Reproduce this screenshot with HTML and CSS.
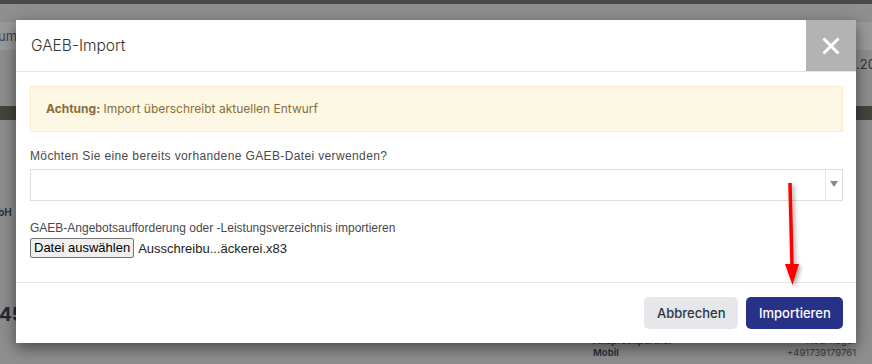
FILE: index.html
```html
<!DOCTYPE html>
<html lang="de">
<head>
<meta charset="utf-8">
<title>GAEB-Import</title>
<link rel="stylesheet" href="styles.css">
</head>
<body>
<div class="page">
  <div class="topbar"></div>
  <div class="tabs">
    <span class="tab tab-left">um</span>
    <span class="tab tab-right">N</span>
  </div>
  <div class="date">.20</div>
  <div class="band"></div>
  <div class="company">bH</div>
  <div class="number">45</div>
  <div class="contact">
    <div class="contact-row"><b>Ansprechpartner</b><span>Noel Reger</span></div>
    <div class="contact-row"><b>Mobil</b><span>+491739179761</span></div>
  </div>
</div>

<div class="modal">
  <div class="modal-header">
    <h4 class="modal-title">GAEB-Import</h4>
    <button class="close" type="button" aria-label="Schließen">
      <svg width="18" height="18" viewBox="0 0 18 18"><path d="M2.5 2.5 L15.5 15.5 M15.5 2.5 L2.5 15.5" stroke="#fff" stroke-width="3" stroke-linecap="square"/></svg>
    </button>
  </div>
  <div class="modal-body">
    <div class="alert"><b>Achtung:</b> Import überschreibt aktuellen Entwurf</div>
    <div class="group">
      <label class="label label-wide">Möchten Sie eine bereits vorhandene GAEB-Datei verwenden?</label>
      <div class="select">
        <span class="select-value"></span>
        <span class="select-arrow"><svg width="8" height="6" viewBox="0 0 8 6"><path d="M0 0 H8 L4 6 Z" fill="#888"/></svg></span>
      </div>
    </div>
    <div class="group group-file">
      <label class="label">GAEB-Angebotsaufforderung oder -Leistungsverzeichnis importieren</label>
      <div class="file">
        <span class="file-btn">Datei auswählen</span>
        <span class="file-name">Ausschreibu...äckerei.x83</span>
      </div>
    </div>
  </div>
  <div class="modal-footer">
    <button class="btn btn-cancel" type="button">Abbrechen</button>
    <button class="btn btn-primary" type="button">Importieren</button>
  </div>
</div>

<svg class="arrow" width="30" height="110" viewBox="0 0 30 110">
  <defs>
    <filter id="sh" x="-50%" y="-20%" width="200%" height="140%">
      <feDropShadow dx="2" dy="2" stdDeviation="2" flood-color="#000" flood-opacity="0.35"/>
    </filter>
  </defs>
  <g filter="url(#sh)">
    <path d="M12 2 L14 84" stroke="#ff0000" stroke-width="3.5" fill="none"/>
    <path d="M7 83 L21 83 L14.5 104 Z" fill="#ff0000"/>
  </g>
</svg>
</body>
</html>
```
FILE: styles.css
```css
* { box-sizing: border-box; }
html, body { margin: 0; padding: 0; }
body {
  width: 872px;
  height: 364px;
  overflow: hidden;
  background: #8f8f8f;
  font-family: Inter, "Liberation Sans", sans-serif;
  position: relative;
}
.page { width: 872px; height: 364px; position: relative; }
.topbar { height: 4px; background: #4b4a47; }
.tabs {
  display: flex;
  justify-content: space-between;
  margin-top: 18px;
  height: 28px;
}
.tab {
  background: #9b9b9b;
  color: #3e4250;
  font-size: 13px;
  line-height: 28px;
}
.tab-left { width: 40px; text-indent: -2px; }
.tab-right { width: 36px; padding-left: 10px; border-radius: 6px 0 0 6px; }
.date {
  text-align: right;
  font-size: 13px;
  color: #333;
  margin-top: 6px;
  margin-right: -4px;
  height: 20px;
}
.band { height: 14px; background: #45443f; margin-top: 30px; }
.company {
  margin-top: 86px;
  font-size: 10px;
  font-weight: 700;
  color: #2b3342;
  margin-left: -2px;
}
.number {
  margin-top: 85px;
  font-size: 19px;
  font-weight: 700;
  color: #232a36;
  margin-left: -1px;
}
.contact {
  position: absolute;
  left: 593px;
  top: 335px;
  width: 263px;
  font-size: 9.5px;
  color: #333;
}
.contact-row { display: flex; justify-content: space-between; line-height: 12px; }
.contact-row b { color: #2f3441; }
.contact-row span { color: #3a3a3a; }

.modal {
  position: absolute;
  left: 16px;
  top: 20px;
  width: 840px;
  height: 323px;
  background: #fff;
  box-shadow: 0 5px 15px rgba(0,0,0,0.5);
  display: flex;
  flex-direction: column;
}
.modal-header {
  height: 52px;
  border-bottom: 1px solid #e5e5e5;
  display: flex;
  align-items: center;
  justify-content: space-between;
  padding-left: 15px;
}
.modal-title {
  margin: 0;
  font-size: 15.5px;
  font-weight: 300;
  color: #333;
}
.close {
  width: 50px;
  height: 51px;
  align-self: flex-start;
  border: 0;
  padding: 0;
  background: #b3b3b3;
  display: flex;
  align-items: center;
  justify-content: center;
}
.modal-body {
  padding: 14px 13px 0 14px;
  height: 210px;
}
.alert {
  background: #fcf8e3;
  border: 1px solid #faebcc;
  color: #8a6d3b;
  font-size: 12px;
  line-height: 18px;
  padding: 13px 15px;
  height: 46px;
}
.alert b { font-weight: 700; }
.group { margin-top: 17px; }
.label {
  display: block;
  font-family: "Liberation Sans", Arial, sans-serif;
  font-size: 12px;
  color: #4a4a4a;
  line-height: 14px;
  margin-bottom: 6px;
}
.label-wide { letter-spacing: 0.37px; }
.select {
  height: 32px;
  border: 1px solid #ddd;
  display: flex;
  justify-content: space-between;
}
.select-arrow {
  width: 17px;
  border-left: 1px solid #e5e5e5;
  display: flex;
  align-items: flex-start;
  justify-content: center;
  padding-top: 11px;
}
.group-file { margin-top: 20px; }
.group-file .label { margin-bottom: 3px; }
.file {
  display: flex;
  align-items: center;
  font-family: "Liberation Sans", Arial, sans-serif;
  font-size: 13px;
  color: #222;
}
.file-btn {
  background: #efefef;
  border: 1px solid #767676;
  border-radius: 2px;
  padding: 1px 3px 2px;
  line-height: 15px;
  color: #000;
}
.file-name { margin-left: 4px; }
.modal-footer {
  border-top: 1px solid #e5e5e5;
  padding: 14px 13px 14px 15px;
  display: flex;
  justify-content: flex-end;
  gap: 8px;
  margin-top: auto;
}
.btn {
  height: 32px;
  border: 0;
  border-radius: 5px;
  font-family: Inter, sans-serif;
  font-size: 13px;
  font-weight: 500;
  padding: 0 13px;
}
.btn-cancel { background: #e5e7ea; color: #2c3442; width: 94px; }
.btn-primary { background: #283188; color: #fff; width: 97px; }

.arrow {
  position: absolute;
  left: 778px;
  top: 181px;
}
```
